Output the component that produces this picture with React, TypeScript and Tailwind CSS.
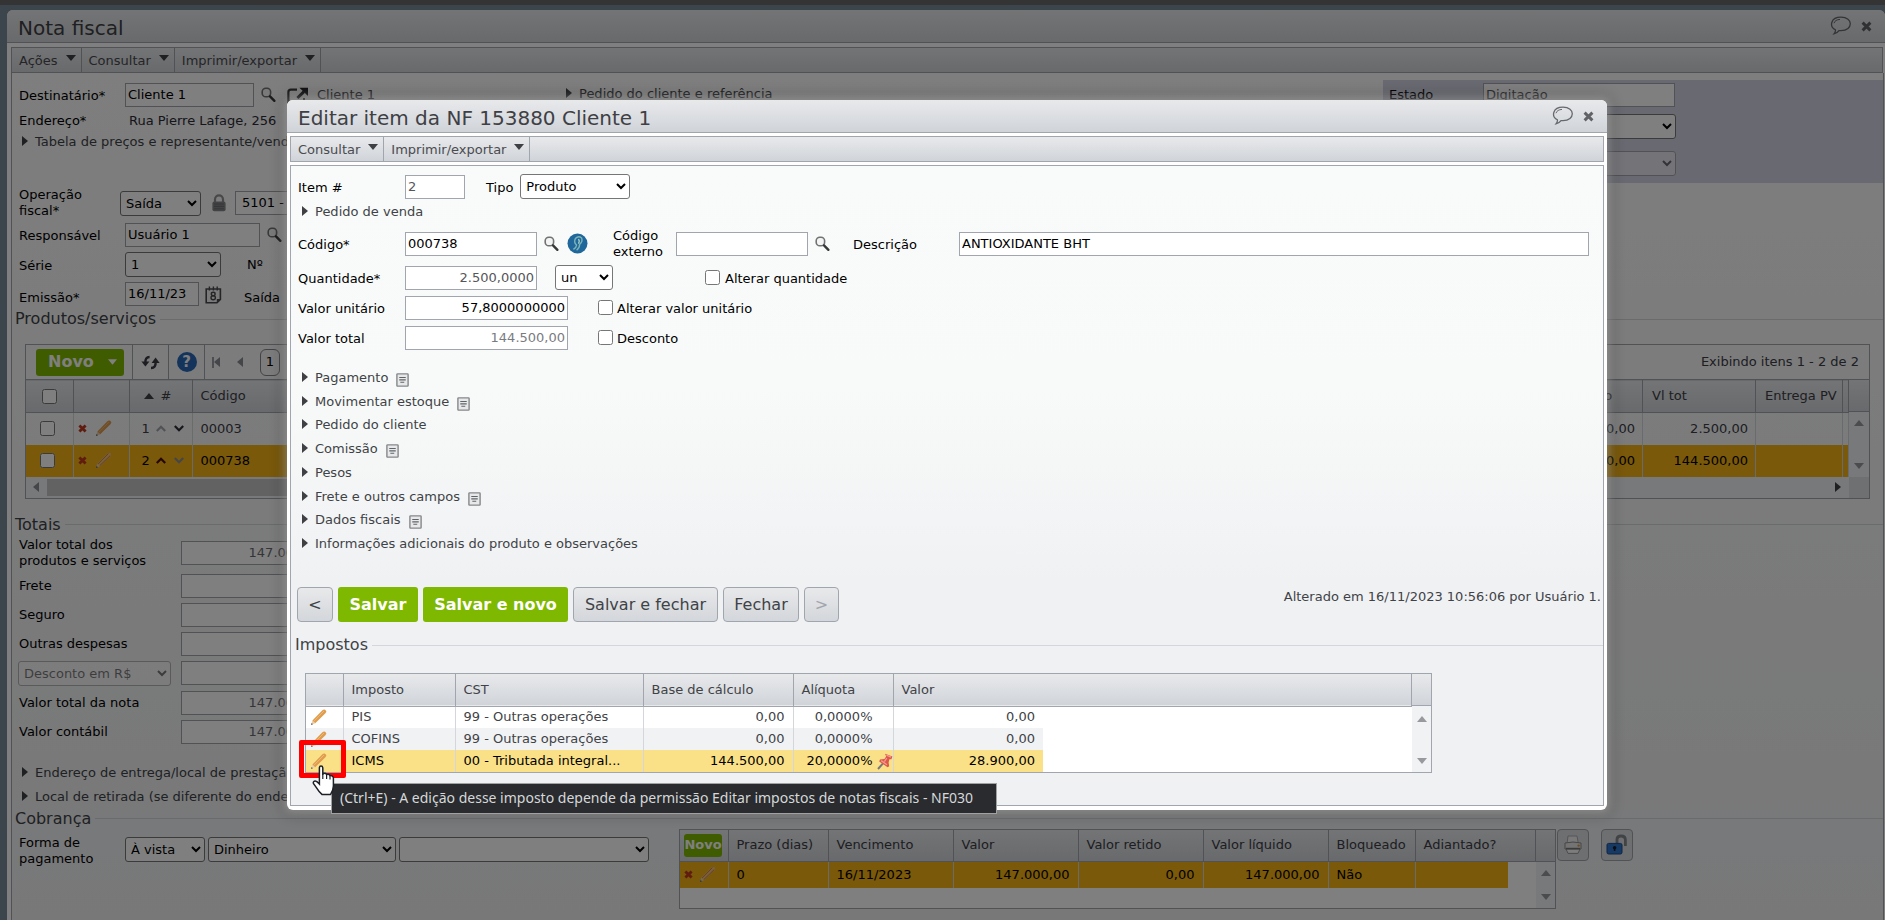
import { useState } from "react";
import clsx from "clsx";

const barra = "bg-linear-to-b from-[#e8e9eb] to-[#d0d4d9] border-[#a1a5ad]";
const caixa = "h-6 border border-[#a1a5ad] bg-white px-0.5 pb-px text-[13px]";
const combo = "h-[25px] rounded-[3px] border border-[#767676] bg-white text-[13px] text-black pl-px disabled:opacity-50";

/* ---------- iconos ---------- */

function Lapis({ fino }: { fino?: boolean }) {
  return (
    <svg className="h-[17px] w-[17px] shrink-0" viewBox="0 0 17 17">
      <path d="M1 16 L2.4 11.6 L5.2 14.2 Z" fill="#e9cfae" />
      <path d="M1 16 L1.6 14 L3 15.2 Z" fill="#555" />
      {fino ? (
        <>
          <path d="M2.4 11.6 L12.8 1.2 Q14.6 0 15.8 1.4 Q16.6 2.8 15.4 4.2 L5.2 14.2 Z" fill="#f2c27c" />
          <path d="M3.2 12 L13.4 1.6 M4.8 13.6 L15.2 3.6" stroke="#c9783e" strokeWidth="0.9" fill="none" />
        </>
      ) : (
        <>
          <path d="M2.4 11.6 L12.4 1.2 Q14.4 -0.2 15.8 1.4 Q17 2.8 15.4 4.2 L5.2 14.2 Z" fill="#e09c4e" />
          <path d="M3.6 12.6 L14 2" stroke="#efb973" strokeWidth="1" fill="none" />
        </>
      )}
    </svg>
  );
}

function Lupa() {
  return (
    <svg className="h-4 w-4 shrink-0" viewBox="0 0 16 16" fill="none">
      <rect x="1.2" y="1.2" width="8.4" height="8.6" rx="3.6" fill="#f4f4f4" stroke="#707274" strokeWidth="1.6" />
      <path d="M9 9.4 L13.4 13.8" stroke="#38383a" strokeWidth="2.4" strokeLinecap="round" />
    </svg>
  );
}

function Excluir() {
  return (
    <svg className="h-[9px] w-[9px] shrink-0" viewBox="0 0 9 9">
      <path d="M1.4 1.4 L7.6 7.6 M7.6 1.4 L1.4 7.6" stroke="#c0391f" strokeWidth="2.8" />
    </svg>
  );
}

function Balao() {
  return (
    <svg className="h-5 w-[22px]" viewBox="0 0 22 20" fill="none" stroke="#66686c" strokeWidth="1.3">
      <path d="M5.4 13.8 C-1 10.4 0.6 1.2 11 1.2 C23.4 1.2 23.4 14.4 11 14.6 L9 14.6 C7.4 16.8 5.8 17.6 4 17.8 C5.2 16.4 5.6 15.2 5.4 13.8 Z" />
      <path d="M4 7.2 C4.6 4.8 7 3.6 10 3.4" strokeWidth="1" />
    </svg>
  );
}

function Fechar() {
  return (
    <svg className="h-[11px] w-[11px]" viewBox="0 0 11 11">
      <path d="M1.6 1.6 L9.4 9.4 M9.4 1.6 L1.6 9.4" stroke="#606266" strokeWidth="2.9" />
    </svg>
  );
}

function Nota() {
  return (
    <svg className="mt-1 ml-2 h-[14px] w-[13px]" viewBox="0 0 12 13" fill="none">
      <rect x="0.8" y="0.8" width="10.4" height="11.4" rx="0.6" fill="#e7e8e9" stroke="#85888b" strokeWidth="1.3" />
      <path d="M3 4.2 H9 M3 6.4 H9 M4 8.6 H7.6" stroke="#606468" />
    </svg>
  );
}

function Seta({ dir, cor = "#3e4044", className }: { dir: "r" | "l" | "u" | "d"; cor?: string; className?: string }) {
  const d = { r: "M0 0 L6 5 L0 10 Z", l: "M6 0 L0 5 L6 10 Z", u: "M0 6 L5 0 L10 6 Z", d: "M0 0 H10 L5 6 Z" }[dir];
  const lado = dir === "r" || dir === "l";
  return (
    <svg className={clsx("shrink-0", lado ? "h-2.5 w-1.5" : "h-1.5 w-2.5", className)} viewBox={lado ? "0 0 6 10" : "0 0 10 6"}>
      <path d={d} fill={cor} />
    </svg>
  );
}

function Chevron({ cima, cor }: { cima?: boolean; cor: string }) {
  return (
    <svg className="h-[7px] w-2.5 shrink-0" viewBox="0 0 10 7" fill="none" stroke={cor} strokeWidth="2.2">
      <path d={cima ? "M0.8 6 L5 1.8 L9.2 6" : "M0.8 1 L5 5.2 L9.2 1"} />
    </svg>
  );
}

function Cadeado() {
  return (
    <svg className="h-[18px] w-4 shrink-0" viewBox="0 0 16 18">
      <path d="M4 8 V5.4 A4 4 0 0 1 12 5.4 V8" fill="none" stroke="#909194" strokeWidth="2.2" />
      <rect x="1.4" y="7.4" width="13.2" height="9.8" rx="2" fill="#85868a" />
      <path d="M3 10 H13 M3 12.4 H13 M3 14.8 H13" stroke="#6c6d70" />
    </svg>
  );
}

function Calendario() {
  return (
    <svg className="h-[18px] w-[17px] shrink-0" viewBox="0 0 17 18" fill="none">
      <path d="M1.2 3 H15.4 V13.4 L12 16.8 H1.2 Z" fill="#f4f4f4" stroke="#4a4b50" strokeWidth="1.6" />
      <path d="M15.4 13 H11.8 V16.8 Z" fill="#4a4b50" />
      <path d="M4.4 0.6 V4.4 M8.4 0.6 V4.4 M12.2 0.6 V4.4" stroke="#4a4b50" strokeWidth="1.4" />
      <ellipse cx="8.2" cy="8" rx="1.9" ry="1.7" stroke="#4a4b50" strokeWidth="1.4" />
      <ellipse cx="8.2" cy="11.8" rx="2.2" ry="2" stroke="#4a4b50" strokeWidth="1.4" />
    </svg>
  );
}

function Externo() {
  return (
    <svg className="h-[17px] w-[22px] shrink-0" viewBox="0 0 22 17" fill="none">
      <path d="M10 2.6 H4 Q1.4 2.6 1.4 5 V17" stroke="#3c3c40" strokeWidth="2.2" />
      <path d="M10.4 11 L17 4.6" stroke="#26262a" strokeWidth="3" />
      <path d="M12.4 0.8 H21 V9 Z" fill="#26262a" />
      <path d="M17 11 V17" stroke="#3c3c40" strokeWidth="1.8" />
    </svg>
  );
}

function Globo() {
  return (
    <svg className="h-[21px] w-[21px] shrink-0" viewBox="0 0 21 21" fill="none">
      <circle cx="10.5" cy="10.5" r="10" fill="#20689c" />
      <path d="M6.4 16.4 Q9.4 14.6 9.6 12 Q6.4 9.4 8.4 5.6 Q11.4 2.4 14.6 5 Q16 8.6 12.6 11.4 Q12.8 14.6 9.6 17.2" stroke="#7db4b8" strokeWidth="1.4" />
      <path d="M11.2 6.4 Q13.2 7.4 11.4 10.6" stroke="#a9d3c4" strokeWidth="1.3" />
    </svg>
  );
}

function Alfinete() {
  return (
    <svg className="h-[17px] w-4 shrink-0" viewBox="0 0 16 17">
      <path d="M1 16 L6 10.4" stroke="#77787c" strokeWidth="2" />
      <path d="M8 0.8 L15.4 3.6 L14.4 6.2 L12.4 6.2 L11.6 9.6 L12.2 13.2 L10.6 14.2 L2.2 8.4 L3 6.4 L7.4 6 L9.2 3.6 Z" fill="#dc574c" />
      <path d="M9.4 2.2 L14 4.2 M9.8 5 L7.4 8.6 M4.2 7.6 L10 11.8" stroke="#f79a90" strokeWidth="1.3" />
    </svg>
  );
}

function Mao() {
  return (
    <svg className="absolute top-[91px] left-[6px] h-[31px] w-[23px]" viewBox="0 0 23 31">
      <path
        d="M7.4 2.6 Q7.6 1 9 1 Q10.6 1 10.8 2.8 V9 Q13.4 7.4 14.6 9.6 Q17 8.6 18 10.6 Q20.6 10 21.4 12.6 V21 Q21.2 26 18.4 29.6 H10.2 Q6.6 26.4 4.2 22.4 L1.4 18.4 Q0.8 16.4 3 16 Q4.6 15.8 7.4 19 Z"
        fill="#fff" stroke="#1d2126" strokeWidth="1.5"
      />
      <path d="M10.8 9 V14 M14.6 10 V14 M18 11 V14.6" stroke="#1d2126" strokeWidth="1.2" />
    </svg>
  );
}

/* ---------- piezas ---------- */

function Titulo({ children, className }: any) {
  return (
    <div className={clsx("flex items-center rounded-t-md border-b", barra, className)}>
      <h1 className="flex-1 pt-1 text-xl text-[#3f4044]">{children}</h1>
      <button aria-label="Comentário"><Balao /></button>
      <button aria-label="Fechar janela" className="mr-[13px] ml-[9px]"><Fechar /></button>
    </div>
  );
}

function Menu({ itens }: { itens: string[] }) {
  return (
    <nav className={clsx("flex h-[26px] border", barra)}>
      {itens.map((i) => (
        <button key={i} className="flex items-center border-r border-[#a1a5ad] pt-0.5 pr-[5px] pl-[7px] text-[#4a4b4f]">
          {i}
          <Seta dir="d" className="mb-1.5 ml-2" />
        </button>
      ))}
    </nav>
  );
}

function Secao({ children, className, nota }: any) {
  return (
    <button className={clsx("flex items-center text-left whitespace-nowrap text-[#3f4347]", className)}>
      <Seta dir="r" className="mr-[7px] mb-0.5" />
      {children}
      {nota && <Nota />}
    </button>
  );
}

function Legenda({ children, className }: any) {
  return (
    <div className={clsx("flex items-center gap-1 text-base text-[#404246]", className)}>
      <h2>{children}</h2>
      <hr className="flex-1 border-[#d3d6da]" />
    </div>
  );
}

function Rolagem({ className }: { className?: string }) {
  return (
    <div className={clsx("flex shrink-0 flex-col items-center justify-between bg-[#f1f2f4]", className)}>
      <Seta dir="u" cor="#97999d" />
      <Seta dir="d" cor="#97999d" />
    </div>
  );
}

function Linha({ id, rotulo, children, className }: any) {
  return (
    <div className={clsx("flex items-center", className)}>
      <label htmlFor={id} className="w-[162px] shrink-0 leading-4">{rotulo}</label>
      {children}
    </div>
  );
}

/* ---------- nota fiscal ---------- */

function Cabecalho() {
  const rotulo = "w-[106px] shrink-0 pt-0.5 leading-4";
  return (
    <div className="flex">
      <div className="w-[548px] shrink-0 pt-2.5 pl-[7px]">
        <div className="flex h-6 items-center">
          <label htmlFor="dest" className={rotulo}>Destinatário*</label>
          <input id="dest" className={clsx(caixa, "w-[129px]")} defaultValue="Cliente 1" />
          <button aria-label="Buscar destinatário" className="ml-[7px]"><Lupa /></button>
          <button aria-label="Abrir destinatário" className="ml-2.5"><Externo /></button>
          <span className="ml-2 text-[#4a4b4f]">Cliente 1</span>
        </div>
        <div className="mt-[3px] flex h-[22px] items-center">
          <span className="w-[110px]">Endereço*</span>
          <span className="whitespace-nowrap text-[#2b2b36]">Rua Pierre Lafage, 256</span>
        </div>
        <Secao className="ml-[3px] h-5">Tabela de preços e representante/vendedor</Secao>
        <div className="mt-[38px] flex h-[26px] items-center">
          <label htmlFor="oper" className="w-[101px] shrink-0 leading-4">Operação<br />fiscal*</label>
          <select id="oper" className={clsx(combo, "w-[81px]")}><option>Saída</option></select>
          <span className="mr-2 ml-2.5"><Cadeado /></span>
          <input aria-label="CFOP" className={clsx(caixa, "w-[160px] pl-1.5")} defaultValue="5101 - Venda" />
        </div>
        <div className="mt-[7px] flex h-6 items-center">
          <label htmlFor="resp" className={rotulo}>Responsável</label>
          <input id="resp" className={clsx(caixa, "w-[135px]")} defaultValue="Usuário 1" />
          <button aria-label="Buscar responsável" className="ml-[7px]"><Lupa /></button>
        </div>
        <div className="mt-[5px] flex h-[25px] items-center">
          <label htmlFor="serie" className={rotulo}>Série</label>
          <select id="serie" className={clsx(combo, "mr-[26px] w-24")}><option>1</option></select>
          <span>Nº</span>
        </div>
        <div className="mt-[5px] flex h-6 items-end">
          <label htmlFor="emis" className={rotulo}>Emissão*</label>
          <input id="emis" className={clsx(caixa, "w-[74px]")} defaultValue="16/11/23" />
          <button aria-label="Calendário" className="mr-[22px] mb-0.5 ml-1.5"><Calendario /></button>
          <span className="leading-4">Saída</span>
        </div>
      </div>
      <div className="flex-1 pt-[11px] pl-1.5">
        <Secao>Pedido do cliente e referência</Secao>
      </div>
      <div className="mt-[7px] h-[103px] w-[500px] shrink-0 bg-[#d3d4e3] pt-[3px] pl-1.5">
        <div className="flex h-6 items-center">
          <label htmlFor="estado" className="w-[94px]">Estado</label>
          <input id="estado" className={clsx(caixa, "w-48 text-[#55565a]")} defaultValue="Digitação" />
        </div>
        <select aria-label="Situação" className={clsx(combo, "mt-[7px] ml-[94px] block w-[193px]")} />
        <select aria-label="Motivo" disabled className={clsx(combo, "mt-3 ml-[94px] block w-[193px]")} />
      </div>
    </div>
  );
}

const produtos = [
  { n: 1, codigo: "00003", desc: "0,00", total: "2.500,00" },
  { n: 2, codigo: "000738", desc: "0,00", total: "144.500,00", sel: true },
];

function Produtos() {
  return (
    <div className="mt-[14px] mr-[13px] ml-[13px] border border-[#a1a5ad]">
      <div className="flex h-[34px] items-center">
        <button className="ml-2.5 flex h-[27px] w-[88px] items-center rounded-[3px] bg-[#7fb800] pl-3 text-base font-bold text-white">
          Novo <Seta dir="d" cor="#fff" className="ml-3.5 h-2 w-[9px]" />
        </button>
        <div className="ml-2 flex h-full w-[37px] items-center justify-center border-x border-[#a1a5ad]">
          <svg className="h-[15px] w-[19px]" viewBox="0 0 19 15" fill="none" stroke="#3a3b44" strokeWidth="2.4">
            <path d="M8.6 2 Q4 2 4.4 8" />
            <path d="M0.4 6.4 H8.4 L4.4 11.6 Z" fill="#3a3b44" stroke="none" />
            <path d="M10 13 Q15 13 14.6 7" />
            <path d="M10.6 8 H18.6 L14.6 2.6 Z" fill="#3a3b44" stroke="none" />
          </svg>
        </div>
        <div className="flex h-full w-9 items-center justify-center border-r border-[#a1a5ad]">
          <button className="h-5 w-5 rounded-full bg-[#2a68b8] text-[15px] leading-5 font-bold text-white">?</button>
        </div>
        <span className="ml-[7px] h-[11px] w-0.5 bg-[#9a9ca2]" />
        <Seta dir="l" cor="#8a8c94" />
        <Seta dir="l" cor="#8a8c94" className="ml-[17px]" />
        <span className="ml-[17px] flex h-[27px] w-5 items-center justify-center rounded-md border border-[#85878d]">1</span>
        <span className="mr-2.5 ml-auto text-[#3c3c46]">Exibindo itens 1 - 2 de 2</span>
      </div>
      <div className="flex">
        <table className="flex-1 table-fixed border-collapse text-[#3c3c46]">
          <colgroup>
            <col className="w-[47px]" /><col className="w-14" /><col className="w-[63px]" /><col />
            <col className="w-[101px]" /><col className="w-[113px]" /><col className="w-[87px]" /><col className="w-1.5" />
          </colgroup>
          <thead>
            <tr className={clsx("h-[33px] border-y", barra)}>
              <th className="border-r border-[#a1a5ad]">
                <input type="checkbox" aria-label="Selecionar todos" className="mx-auto block size-[15px]" />
              </th>
              <th className="border-r border-[#a1a5ad]" />
              <th className="border-r border-[#a1a5ad] font-normal">
                <span className="flex items-center pl-3.5"><Seta dir="u" className="mr-[7px]" />#</span>
              </th>
              <th className="border-r border-[#a1a5ad] pl-2 text-left font-normal">Código</th>
              <th className="border-r border-[#a1a5ad] pl-[9px] text-left font-normal">Desconto</th>
              <th className="border-r border-[#a1a5ad] pl-[9px] text-left font-normal">Vl tot</th>
              <th className="border-r border-[#a1a5ad] pl-[9px] text-left font-normal whitespace-nowrap">Entrega PV</th>
              <th className="border-r border-[#a1a5ad]" />
            </tr>
          </thead>
          <tbody>
            {produtos.map((p) => (
              <tr key={p.n} className={clsx("h-8 [&>td]:border-r [&>td]:border-[#d3d6da]", p.sel && "bg-[#f4b216] text-black")}>
                <td><input type="checkbox" aria-label={`Item ${p.n}`} className="ml-3.5 block size-[15px]" /></td>
                <td><span className="flex items-center gap-2 pl-1"><Excluir /><Lapis fino={p.sel} /></span></td>
                <td>
                  <span className="flex items-center pl-3">
                    {p.n}
                    <span className="mr-2 ml-1.5"><Chevron cima cor={p.sel ? "#4d0d06" : "#a3a5aa"} /></span>
                    <Chevron cor={p.sel ? "#8d8d95" : "#2c2d3a"} />
                  </span>
                </td>
                <td className="pl-2">{p.codigo}</td>
                <td className="pr-[7px] text-right">{p.desc}</td>
                <td className="pr-[7px] text-right">{p.total}</td>
                <td />
                <td />
              </tr>
            ))}
          </tbody>
        </table>
        <div className="flex flex-col">
          <div className={clsx("h-[33px] border-y", barra)} />
          <Rolagem className="w-5 flex-1 pt-2 pb-2" />
        </div>
      </div>
      <div className="flex h-[21px] items-center bg-[#f1f2f4]">
        <Seta dir="l" cor="#8a8c94" className="mr-2 ml-[7px]" />
        <span className="h-[17px] w-[1200px] bg-[#c4c5c7]" />
        <Seta dir="r" className="mr-2 ml-auto" />
        <span className="h-full w-5 bg-[#dfe1e4]" />
      </div>
    </div>
  );
}

const totais = [
  ["Frete", ""],
  ["Seguro", ""],
  ["Outras despesas", ""],
  ["Desconto em R$", ""],
  ["Valor total da nota", "147.000,00"],
  ["Valor contábil", "147.000,00"],
];

function Totais() {
  return (
    <div className="mt-[5px] ml-[7px]">
      <Linha id="vprod" className="mb-[9px] h-6" rotulo={<>Valor total dos<br />produtos e serviços</>}>
        <input id="vprod" readOnly className={clsx(caixa, "w-[145px] text-right text-[#6a6b6f]")} defaultValue="147.000,00" />
      </Linha>
      <div className="space-y-[5px]">
        {totais.map(([nome, valor], i) =>
          nome.startsWith("Desconto") ? (
            <div key={i} className="flex h-[25px] items-center">
              <select aria-label="Tipo de desconto" disabled className={clsx(combo, "mr-2.5 w-[153px] -ml-px")}>
                <option>{nome}</option>
              </select>
              <input aria-label={nome} className={clsx(caixa, "w-[145px]")} />
            </div>
          ) : (
            <Linha key={i} id={"t" + i} rotulo={nome} className="h-6">
              <input id={"t" + i} className={clsx(caixa, "w-[145px] text-right text-[#6a6b6f]")} defaultValue={valor} />
            </Linha>
          ),
        )}
      </div>
    </div>
  );
}

function Cobranca() {
  const celula = "border-r border-[#a1a5ad] pl-2 text-left font-normal whitespace-nowrap";
  return (
    <div className="flex items-start pl-[7px]">
      <label htmlFor="forma" className="w-[106px] pt-1.5 leading-4">Forma de<br />pagamento</label>
      <div className="flex gap-[3px] pt-2">
        <select id="forma" className={clsx(combo, "w-20")}><option>À vista</option></select>
        <select aria-label="Meio" className={clsx(combo, "w-[188px]")}><option>Dinheiro</option></select>
        <select aria-label="Conta" className={clsx(combo, "w-[250px]")} />
      </div>
      <div className="ml-[30px] flex h-20 border border-[#a1a5ad]">
        <div className="bg-white">
          <table className="w-[856px] table-fixed border-collapse text-[#3c3c46]">
            <colgroup>
              <col className="w-12" /><col className="w-[100px]" /><col className="w-[125px]" /><col className="w-[125px]" />
              <col className="w-[125px]" /><col className="w-[125px]" /><col className="w-[87px]" /><col className="w-[93px]" /><col />
            </colgroup>
            <thead>
              <tr className={clsx("h-8 border-b", barra)}>
                <th className="border-r border-[#a1a5ad]">
                  <button className="ml-1 block h-[23px] w-[38px] rounded-[3px] bg-[#7fb800] text-[13px] font-bold text-white">Novo</button>
                </th>
                {["Prazo (dias)", "Vencimento", "Valor", "Valor retido", "Valor líquido", "Bloqueado"].map((c) => (
                  <th key={c} className={celula}>{c}</th>
                ))}
                <th className="pl-2 text-left font-normal">Adiantado?</th>
                <th className="border-r border-[#a1a5ad]" />
              </tr>
            </thead>
            <tbody>
              <tr className="h-[26px] text-black [&>td]:bg-[#f4b216] [&>td]:border-[#d3d6da] [&>td:not(:last-child)]:border-r">
                <td><span className="flex items-center gap-1.5 pl-1"><Excluir /><Lapis fino /></span></td>
                <td className="pl-2">0</td>
                <td className="pl-2">16/11/2023</td>
                <td className="pr-2 text-right">147.000,00</td>
                <td className="pr-2 text-right">0,00</td>
                <td className="pr-2 text-right">147.000,00</td>
                <td className="pl-2">Não</td>
                <td />
              </tr>
            </tbody>
          </table>
        </div>
        <div className="flex flex-col">
          <div className={clsx("h-8 border-b", barra)} />
          <Rolagem className="w-[19px] flex-1 py-2" />
        </div>
      </div>
      <button aria-label="Imprimir" className="ml-px flex h-8 w-8 items-center justify-center rounded border border-[#a1a5ad] bg-[#dcdee1]">
        <svg className="h-5 w-5" viewBox="0 0 20 20">
          <path d="M5 1 H14 L15.4 9 H4 Z" fill="#f3f3f3" stroke="#aaa" />
          <path d="M2 8 Q10 6 18 8 V14 H2 Z" fill="#e8e8e8" stroke="#8d8d8d" />
          <path d="M3 14 H17 L15 18.4 H5 Z" fill="#fafafa" stroke="#999" />
          <path d="M3 13.6 H17" stroke="#777" strokeWidth="1.6" />
          <circle cx="15.6" cy="10.6" r="1.2" fill="#e09a50" />
        </svg>
      </button>
      <button aria-label="Desbloquear" className="ml-3 flex h-8 w-8 items-center justify-center rounded border border-[#a1a5ad] bg-[#dcdee1]">
        <svg className="h-[22px] w-[22px]" viewBox="0 0 22 22" fill="none">
          <path d="M11 10 V5 Q11.4 2 15 2 Q19.4 2 19.4 6 V12" stroke="#85868a" strokeWidth="2.8" />
          <rect x="1" y="9.4" width="15" height="10.6" rx="1.6" fill="#2f74c8" stroke="#1c4c90" />
          <circle cx="8.6" cy="13.8" r="1.8" fill="#1a1f2c" />
          <path d="M8.6 14 V17" stroke="#1a1f2c" strokeWidth="1.6" />
        </svg>
      </button>
    </div>
  );
}

/* ---------- editar item ---------- */

const secoes: [string, boolean][] = [
  ["Pagamento", true],
  ["Movimentar estoque", true],
  ["Pedido do cliente", false],
  ["Comissão", true],
  ["Pesos", false],
  ["Frete e outros campos", true],
  ["Dados fiscais", true],
  ["Informações adicionais do produto e observações", false],
];

const impostos = [
  { nome: "PIS", cst: "99 - Outras operações", base: "0,00", aliq: "0,0000%", valor: "0,00" },
  { nome: "COFINS", cst: "99 - Outras operações", base: "0,00", aliq: "0,0000%", valor: "0,00" },
  { nome: "ICMS", cst: "00 - Tributada integral...", base: "144.500,00", aliq: "20,0000%", valor: "28.900,00" },
];

function Impostos() {
  return (
    <div className="relative mt-4 mr-[171px] mb-8 ml-[14px] flex border border-[#a1a5ad] bg-white">
      <table className="flex-1 table-fixed border-collapse text-[#3f4347]">
        <colgroup>
          <col className="w-[37px]" /><col className="w-28" /><col className="w-[188px]" /><col className="w-[150px]" />
          <col className="w-[100px]" /><col className="w-[150px]" /><col />
        </colgroup>
        <thead>
          <tr className={clsx("h-8 border-b", barra)}>
            <th className="border-r border-[#a1a5ad]" />
            {["Imposto", "CST", "Base de cálculo", "Alíquota"].map((c) => (
              <th key={c} className="border-r border-[#a1a5ad] pl-2 text-left font-normal">{c}</th>
            ))}
            <th className="pl-2 text-left font-normal">Valor</th>
            <th className="border-r border-[#a1a5ad]" />
          </tr>
        </thead>
        <tbody>
          {impostos.map((i, n) => (
            <tr
              key={i.nome}
              className={clsx(
                "h-[22px] leading-4 [&>td]:border-[#d3d6da] [&>td:not(:last-child)]:border-r",
                n === 1 && "[&>td]:bg-[#f1f2f4]",
                n === 2 && "text-black [&>td]:bg-[#fae087]",
              )}
            >
              <td><button aria-label={"Editar " + i.nome} className="ml-1 block"><Lapis /></button></td>
              <td className="pl-2">{i.nome}</td>
              <td className="pl-2 whitespace-nowrap">{i.cst}</td>
              <td className="pr-2 text-right">{i.base}</td>
              <td className={n === 2 ? "" : "pr-5"}>
                <span className="flex items-center justify-end gap-1">{i.aliq}{n === 2 && <Alfinete />}</span>
              </td>
              <td className="pr-2 text-right">{i.valor}</td>
            </tr>
          ))}
        </tbody>
      </table>
      <div className="flex flex-col">
        <div className={clsx("h-8 border-b", barra)} />
        <Rolagem className="w-[19px] flex-1 pt-2.5 pb-2" />
      </div>
      <div className="absolute top-[66px] -left-[7px] h-[38px] w-[47px] rounded-xs border-5 border-[#ff0000]" />
      <div
        role="tooltip"
        className="absolute top-[109px] left-[25px] h-[31px] w-[666px] border border-[#9fa1a3] bg-[#292b2e] px-2 text-sm leading-7 whitespace-nowrap text-[#d6d8da] font-['Noto_Sans',sans-serif]"
      >
        (Ctrl+E) - A edição desse imposto depende da permissão Editar impostos de notas fiscais - NF030
      </div>
      <Mao />
    </div>
  );
}

function EditarItem({ fechar }: { fechar: () => void }) {
  const botao = "h-[35px] rounded border border-[#a1a5ad] bg-linear-to-b from-[#e8e9eb] to-[#d3d6da] text-base text-[#3f4347]";
  const verde = "h-[35px] rounded-[3px] bg-[#7fb800] text-base font-bold text-white";
  const rotulo = "w-[107px] shrink-0 pt-0.5";
  return (
    <div
      role="dialog"
      className="absolute top-[100px] right-[278px] left-[287px] rounded-md bg-white pb-1 shadow-[0_0_8px_3px_rgba(255,255,255,0.3),0_0_14px_4px_rgba(0,0,0,0.3)]"
    >
      <Titulo className="h-[33px] pl-[11px]">Editar item da NF 153880 Cliente 1</Titulo>
      <div className="mx-[3px] mt-[3px]"><Menu itens={["Consultar", "Imprimir/exportar"]} /></div>
      <div className="mx-[3px] mt-[3px] border border-[#a1a5ad] bg-linear-to-b from-[#f9fbfa] via-[#f8faf9] via-35% to-[#f0f1f3] to-65%">
        <div className="flex flex-col gap-[5px] pt-2 pl-[7px]">
          <div className="flex h-[25px] items-center">
            <label htmlFor="item" className={rotulo}>Item #</label>
            <input id="item" className={clsx(caixa, "w-[60px] text-[#55565a]")} defaultValue="2" />
            <label htmlFor="tipo" className="mr-[7px] ml-[21px] pt-0.5">Tipo</label>
            <select id="tipo" className={clsx(combo, "w-[110px]")}><option>Produto</option></select>
          </div>
          <Secao className="-mt-[3px] mb-[3px] ml-1 h-[22px]">Pedido de venda</Secao>
          <div className="mb-1 flex h-[25px] items-center">
            <label htmlFor="cod" className={rotulo}>Código*</label>
            <input id="cod" className={clsx(caixa, "w-[132px]")} defaultValue="000738" />
            <button aria-label="Buscar código" className="ml-[7px]"><Lupa /></button>
            <button aria-label="Consulta" className="ml-[7px]"><Globo /></button>
            <label htmlFor="ext" className="ml-[25px] w-[63px] leading-4">Código externo</label>
            <input id="ext" className={clsx(caixa, "w-[132px]")} />
            <button aria-label="Buscar código externo" className="ml-[7px]"><Lupa /></button>
            <label htmlFor="desc" className="ml-[22px] w-[106px] shrink-0 pt-0.5">Descrição</label>
            <input id="desc" className={clsx(caixa, "mr-[14px] flex-1")} defaultValue="ANTIOXIDANTE BHT" />
          </div>
          <div className="flex h-[25px] items-center">
            <label htmlFor="qtd" className={rotulo}>Quantidade*</label>
            <input id="qtd" className={clsx(caixa, "w-[132px] px-0 text-right text-[#55565a]")} defaultValue="2.500,0000" />
            <select aria-label="Unidade" className={clsx(combo, "ml-[18px] w-[58px]")}><option>un</option></select>
            <input id="altq" type="checkbox" className="ml-[92px] size-[15px]" />
            <label htmlFor="altq" className="ml-[5px] pt-0.5">Alterar quantidade</label>
          </div>
          <div className="flex h-[25px] items-center">
            <label htmlFor="vu" className={rotulo}>Valor unitário</label>
            <input id="vu" className={clsx(caixa, "w-[163px] px-0 text-right")} defaultValue="57,8000000000" />
            <input id="altv" type="checkbox" className="ml-[30px] size-[15px]" />
            <label htmlFor="altv" className="ml-1 pt-0.5">Alterar valor unitário</label>
          </div>
          <div className="flex h-[25px] items-center">
            <label htmlFor="vt" className={rotulo}>Valor total</label>
            <input id="vt" className={clsx(caixa, "w-[163px] px-0 text-right text-[#7a7b7f]")} defaultValue="144.500,00" />
            <input id="des" type="checkbox" className="ml-[30px] size-[15px]" />
            <label htmlFor="des" className="ml-1 pt-0.5">Desconto</label>
          </div>
        </div>
        <div className="mt-[17px] ml-[11px] flex h-[188px] flex-col items-start justify-between">
          {secoes.map(([nome, nota]) => (
            <Secao key={nome} nota={nota} className="h-[22px]">{nome}</Secao>
          ))}
        </div>
        <div className="mt-8 flex gap-[5px] pl-1.5">
          <button className={clsx(botao, "w-9")}>&lt;</button>
          <button className={clsx(verde, "w-20")}>Salvar</button>
          <button className={clsx(verde, "w-[145px]")}>Salvar e novo</button>
          <button className={clsx(botao, "w-[145px]")}>Salvar e fechar</button>
          <button className={clsx(botao, "w-[76px]")} onClick={fechar}>Fechar</button>
          <button className={clsx(botao, "w-[35px] text-[#a1a5ad]")} disabled>&gt;</button>
          <span className="mr-0.5 ml-auto text-[#3f4347]">Alterado em 16/11/2023 10:56:06 por Usuário 1.</span>
        </div>
        <Legenda className="mt-[11px] ml-1 h-6">Impostos</Legenda>
        <Impostos />
      </div>
    </div>
  );
}

export default function App() {
  const [aberto, setAberto] = useState<boolean>(true);
  return (
    <div className="relative flex min-h-screen flex-col bg-[#788a98] text-[13px] leading-5 text-black font-['DejaVu_Sans',sans-serif]">
      <div className="mb-[5px] h-[5px] bg-[#686868]" />
      <div className="ml-[7px] flex flex-1 flex-col rounded-t-md bg-white">
        <Titulo className="h-[33px] pl-[11px]">Nota fiscal</Titulo>
        <div className="mx-1 mt-1 mr-0.5"><Menu itens={["Ações", "Consultar", "Imprimir/exportar"]} /></div>
        <div className="mr-px ml-1 flex-1 border-x border-[#a1a5ad] bg-linear-to-b from-[#fcfcfc] to-[#f0f1f3]">
          <Cabecalho />
          <Legenda className="mt-0.5 ml-[3px] h-[22px]">Produtos/serviços</Legenda>
          <Produtos />
          <Legenda className="mt-[15px] ml-[3px] h-[22px]">Totais</Legenda>
          <Totais />
          <Secao className="mt-[17px] ml-2.5 h-6">Endereço de entrega/local de prestação de serviço</Secao>
          <Secao className="ml-2.5 h-6">Local de retirada (se diferente do endereço)</Secao>
          <Legenda className="ml-[3px] h-5">Cobrança</Legenda>
          <Cobranca />
        </div>
      </div>
      {aberto && (
        <>
          <div className="absolute inset-0 bg-black/50" />
          <EditarItem fechar={() => setAberto(false)} />
        </>
      )}
    </div>
  );
}
